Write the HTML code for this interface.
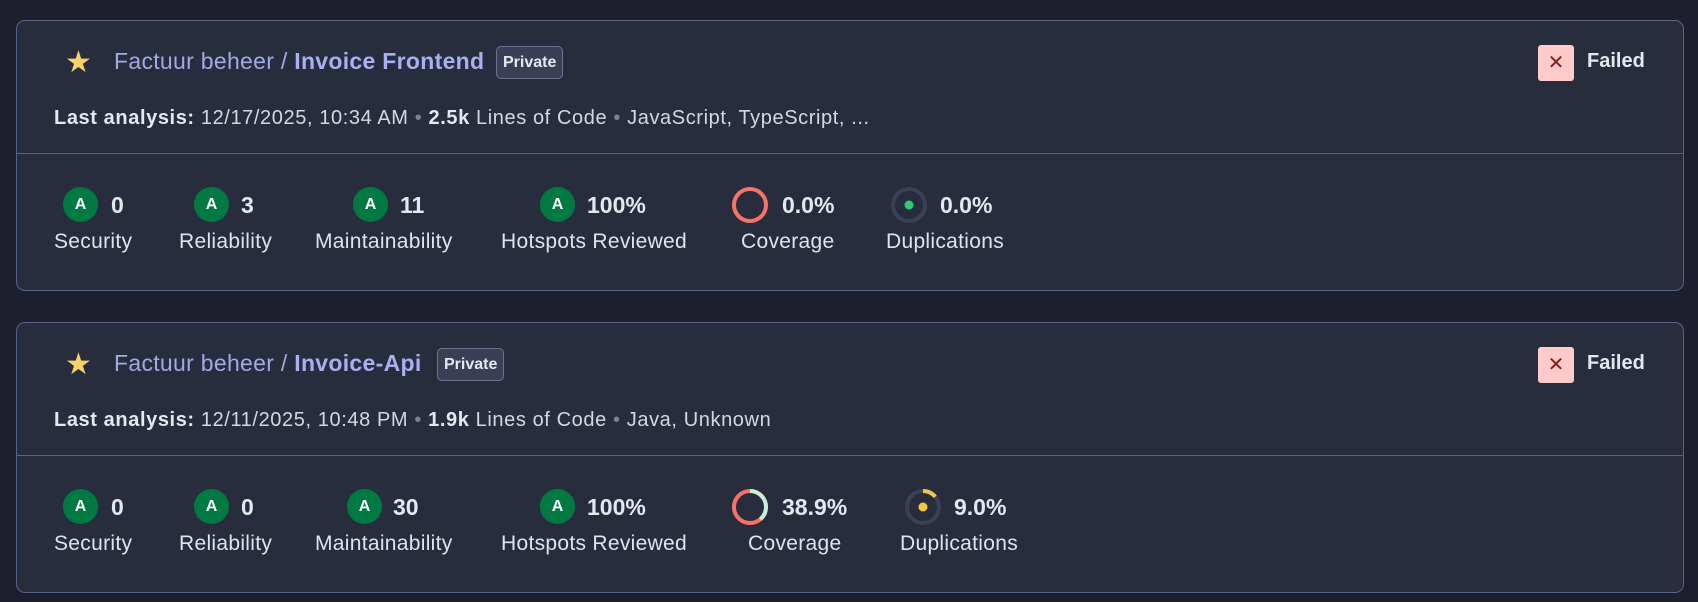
<!DOCTYPE html>
<html><head><meta charset="utf-8"><style>
*{margin:0;padding:0;box-sizing:border-box}
body{width:1698px;height:602px;background:#1d1f2e;font-family:"Liberation Sans",sans-serif;color:#e1e3ec;position:relative;overflow:hidden}
.card{position:absolute;left:16px;width:1668px;height:271px;background:#282d3e;border:1px solid #56648a;border-radius:9px}
.div{position:absolute;left:0;right:0;top:132px;height:1px;background:#56648a}
.a{position:absolute;white-space:nowrap}
.star{left:48px;top:24px;color:#f6d26b;font-size:30px}
.title{left:97px;top:27px;font-size:23px;letter-spacing:0.3px;color:#a3a9e6}
.title b{color:#a9aff0}
.badge{position:absolute;top:25px;height:33px;border:1px solid #6a7390;background:#3a3f55;border-radius:5px;font-size:16px;font-weight:bold;color:#e6e8f0;padding:0 6px;line-height:31px}
.fx{left:1521px;top:24px;width:36px;height:36px;background:#fecaca;border-radius:3px;color:#8b1a1a;font-size:20px;text-align:center;line-height:36px}
.failed{left:1570px;top:29px;font-size:20px;font-weight:bold;color:#e6e8f0}
.meta{left:37px;top:86px;font-size:20px;letter-spacing:0.6px;color:#d5d8e2}
.meta b{color:#e6e8f0}
.dot{color:#7a8096}
.g{width:35px;height:35px;border-radius:50%;background:#007a42;color:#fff;font-weight:bold;font-size:16px;text-align:center;line-height:35px;top:166px}
.n{top:171px;font-size:23px;font-weight:bold;color:#e6e8f0}
.l{top:209px;font-size:21px;letter-spacing:0.3px;color:#e1e3ec}
svg{position:absolute;top:165px}
</style></head><body>

<div class="card" style="top:20px">
<div class="a star">★</div>
<div class="a title">Factuur beheer / <b>Invoice Frontend</b></div>
<div class="badge" style="left:479px">Private</div>
<div class="a fx">✕</div>
<div class="a failed">Failed</div>
<div class="a meta"><b>Last analysis:</b> 12/17/2025, 10:34 AM <span class="dot">•</span> <b>2.5k</b> Lines of Code <span class="dot">•</span> JavaScript, TypeScript, ...</div>
<div class="div"></div>
<div class="a g" style="left:46px">A</div><div class="a n" style="left:94px">0</div><div class="a l" style="left:37px">Security</div>
<div class="a g" style="left:177px">A</div><div class="a n" style="left:224px">3</div><div class="a l" style="left:162px">Reliability</div>
<div class="a g" style="left:336px">A</div><div class="a n" style="left:383px">11</div><div class="a l" style="left:298px">Maintainability</div>
<div class="a g" style="left:523px">A</div><div class="a n" style="left:570px">100%</div><div class="a l" style="left:484px">Hotspots Reviewed</div>
<svg style="left:714px" width="38" height="38"><circle cx="19" cy="19" r="16" fill="none" stroke="#f87366" stroke-width="4"/></svg>
<div class="a n" style="left:765px">0.0%</div><div class="a l" style="left:724px">Coverage</div>
<svg style="left:873px" width="38" height="38"><circle cx="19" cy="19" r="16" fill="none" stroke="#3b4054" stroke-width="4"/><circle cx="19" cy="19" r="4.5" fill="#2ecc71"/></svg>
<div class="a n" style="left:923px">0.0%</div><div class="a l" style="left:869px">Duplications</div>
</div>

<div class="card" style="top:322px">
<div class="a star">★</div>
<div class="a title">Factuur beheer / <b>Invoice-Api</b></div>
<div class="badge" style="left:420px">Private</div>
<div class="a fx">✕</div>
<div class="a failed">Failed</div>
<div class="a meta"><b>Last analysis:</b> 12/11/2025, 10:48 PM <span class="dot">•</span> <b>1.9k</b> Lines of Code <span class="dot">•</span> Java, Unknown</div>
<div class="div"></div>
<div class="a g" style="left:46px">A</div><div class="a n" style="left:94px">0</div><div class="a l" style="left:37px">Security</div>
<div class="a g" style="left:177px">A</div><div class="a n" style="left:224px">0</div><div class="a l" style="left:162px">Reliability</div>
<div class="a g" style="left:330px">A</div><div class="a n" style="left:376px">30</div><div class="a l" style="left:298px">Maintainability</div>
<div class="a g" style="left:523px">A</div><div class="a n" style="left:570px">100%</div><div class="a l" style="left:484px">Hotspots Reviewed</div>
<svg style="left:714px" width="38" height="38" viewBox="0 0 38 38"><circle cx="19" cy="19" r="16" fill="none" stroke="#f87366" stroke-width="4"/><circle cx="19" cy="19" r="16" fill="none" stroke="#c8f0d8" stroke-width="4" stroke-dasharray="39 100" transform="rotate(-90 19 19)"/></svg>
<div class="a n" style="left:765px">38.9%</div><div class="a l" style="left:731px">Coverage</div>
<svg style="left:887px" width="38" height="38" viewBox="0 0 38 38"><circle cx="19" cy="19" r="16" fill="none" stroke="#3b4054" stroke-width="4"/><circle cx="19" cy="19" r="16" fill="none" stroke="#f6c744" stroke-width="4" stroke-dasharray="14 100" transform="rotate(-90 19 19)"/><circle cx="19" cy="19" r="4.5" fill="#f6c744"/></svg>
<div class="a n" style="left:937px">9.0%</div><div class="a l" style="left:883px">Duplications</div>
</div>

</body></html>
